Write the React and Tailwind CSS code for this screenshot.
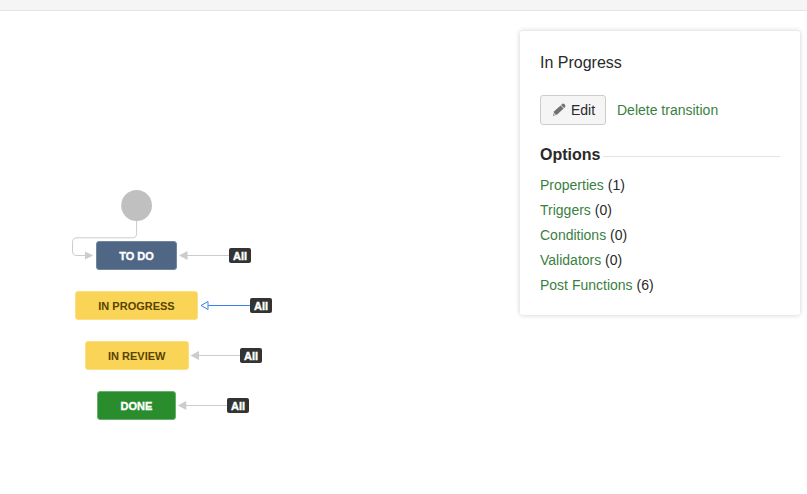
const statuses = [
  { name: "TO DO", box: "left-[96px] top-[230px] w-[81px] bg-[#4f6785] border-[#7286a0] text-white [-webkit-text-stroke:0.35px_white]", badge: "left-[229px] top-[237px]" },
  { name: "IN PROGRESS", box: "left-[75px] top-[280px] w-[123px] bg-[#fad456] border-[#fcdf80] text-[#594300]", badge: "left-[250px] top-[287px]" },
  { name: "IN REVIEW", box: "left-[85px] top-[330px] w-[103.5px] bg-[#fad456] border-[#fcdf80] text-[#594300]", badge: "left-[240px] top-[337px]" },
  { name: "DONE", box: "left-[97px] top-[380px] w-[79px] bg-[#298d2e] border-[#69b06d] text-white [-webkit-text-stroke:0.35px_white]", badge: "left-[227px] top-[387px]" },
];

const options = [
  ["Properties", 1],
  ["Triggers", 0],
  ["Conditions", 0],
  ["Validators", 0],
  ["Post Functions", 6],
];

function Connectors() {
  return (
    <svg className="absolute left-0 top-0" width="519" height="483" viewBox="0 11 519 483" fill="none">
      <circle cx="136.6" cy="205.5" r="15.4" fill="#c0c0c0" />
      <path d="M136.6 221V233.5Q136.6 237.8 132.3 237.8H77Q72.5 237.8 72.5 242.3V251Q72.5 255.5 77 255.5H86" stroke="#ccc" />
      <path d="M85 251.5L93.3 255.5L85 259.5Z" fill="#ccc" />
      <path d="M187 255.5H229M198 355.5H240M186 405.5H228" stroke="#ccc" />
      <path d="M179 255.5L187.5 251V260ZM190.5 355.5L199 351V360ZM177.8 405.5L186.3 401V410Z" fill="#ccc" />
      <path d="M208.3 305.5H250M201 305.5L208 301.5V309.5Z" stroke="#3b82f0" />
    </svg>
  );
}

function WorkflowCanvas() {
  return (
    <main className="relative flex-1">
      <Connectors />
      {statuses.map((s) => (
        <div key={s.name}>
          <div className={`absolute flex h-[29px] items-center justify-center rounded-[3px] border text-[11px] font-bold whitespace-nowrap ${s.box}`}>
            <span className="relative top-px">{s.name}</span>
          </div>
          <div className={`absolute flex h-[15px] w-[22px] items-center justify-center rounded-[2px] bg-[#333] text-[11px] font-bold text-white [-webkit-text-stroke:0.4px_white] ${s.badge}`}>
            <span className="relative top-px">All</span>
          </div>
        </div>
      ))}
    </main>
  );
}

function Pencil() {
  return (
    <svg width="14" height="14" viewBox="0 0 14 14" fill="#707070">
      <path d="M2.2 8.3L8.6 2.4L11.6 5.6L5.2 11.5L1 12.9Z" />
      <path d="M9.1 1.9L10.1 1Q11.3 .2 12.3 1.1L13 1.9Q13.8 3.1 13.1 4.1L12.1 5.1Z" />
      <path d="M2 10L4.1 11.4L1.8 12.1Z" fill="#e2e2e2" />
    </svg>
  );
}

export default function App() {
  return (
    <div className="flex h-[494px] w-[807px] flex-col overflow-hidden bg-white font-['Liberation_Sans',Arial,sans-serif] text-[14px] text-[#292929]">
      <header className="h-[11px] shrink-0 border-b border-[#e5e5e5] bg-[#f5f5f5]" />
      <div className="flex flex-1">
        <WorkflowCanvas />
        <aside className="mt-[20px] mr-[7px] h-[284px] w-[280px] rounded-[3px] bg-white px-5 pt-[22px] shadow-[0_0_5px_rgba(0,0,0,0.2)]">
          <h2 className="text-[16px] leading-5">In Progress</h2>
          <div className="mt-[22px] flex items-center gap-[11px]">
            <button className="flex h-[30px] w-[66px] items-center gap-[5px] rounded-[3px] border border-[#ccc] bg-[#f5f5f5] pl-[11px]">
              <Pencil />
              <span>Edit</span>
            </button>
            <a className="text-[#3b7f3f]">Delete transition</a>
          </div>
          <div className="mt-5 flex items-center gap-[3px]">
            <h3 className="text-[16px] leading-5 font-bold">Options</h3>
            <div className="mt-[3px] h-px flex-1 bg-[#e2e2e2]" />
          </div>
          <ul className="mt-2">
            {options.map(([label, count]) => (
              <li key={label} className="h-[25px] leading-[25px]">
                <a className="text-[#3b7f3f]">{label}</a> ({count})
              </li>
            ))}
          </ul>
        </aside>
      </div>
    </div>
  );
}
